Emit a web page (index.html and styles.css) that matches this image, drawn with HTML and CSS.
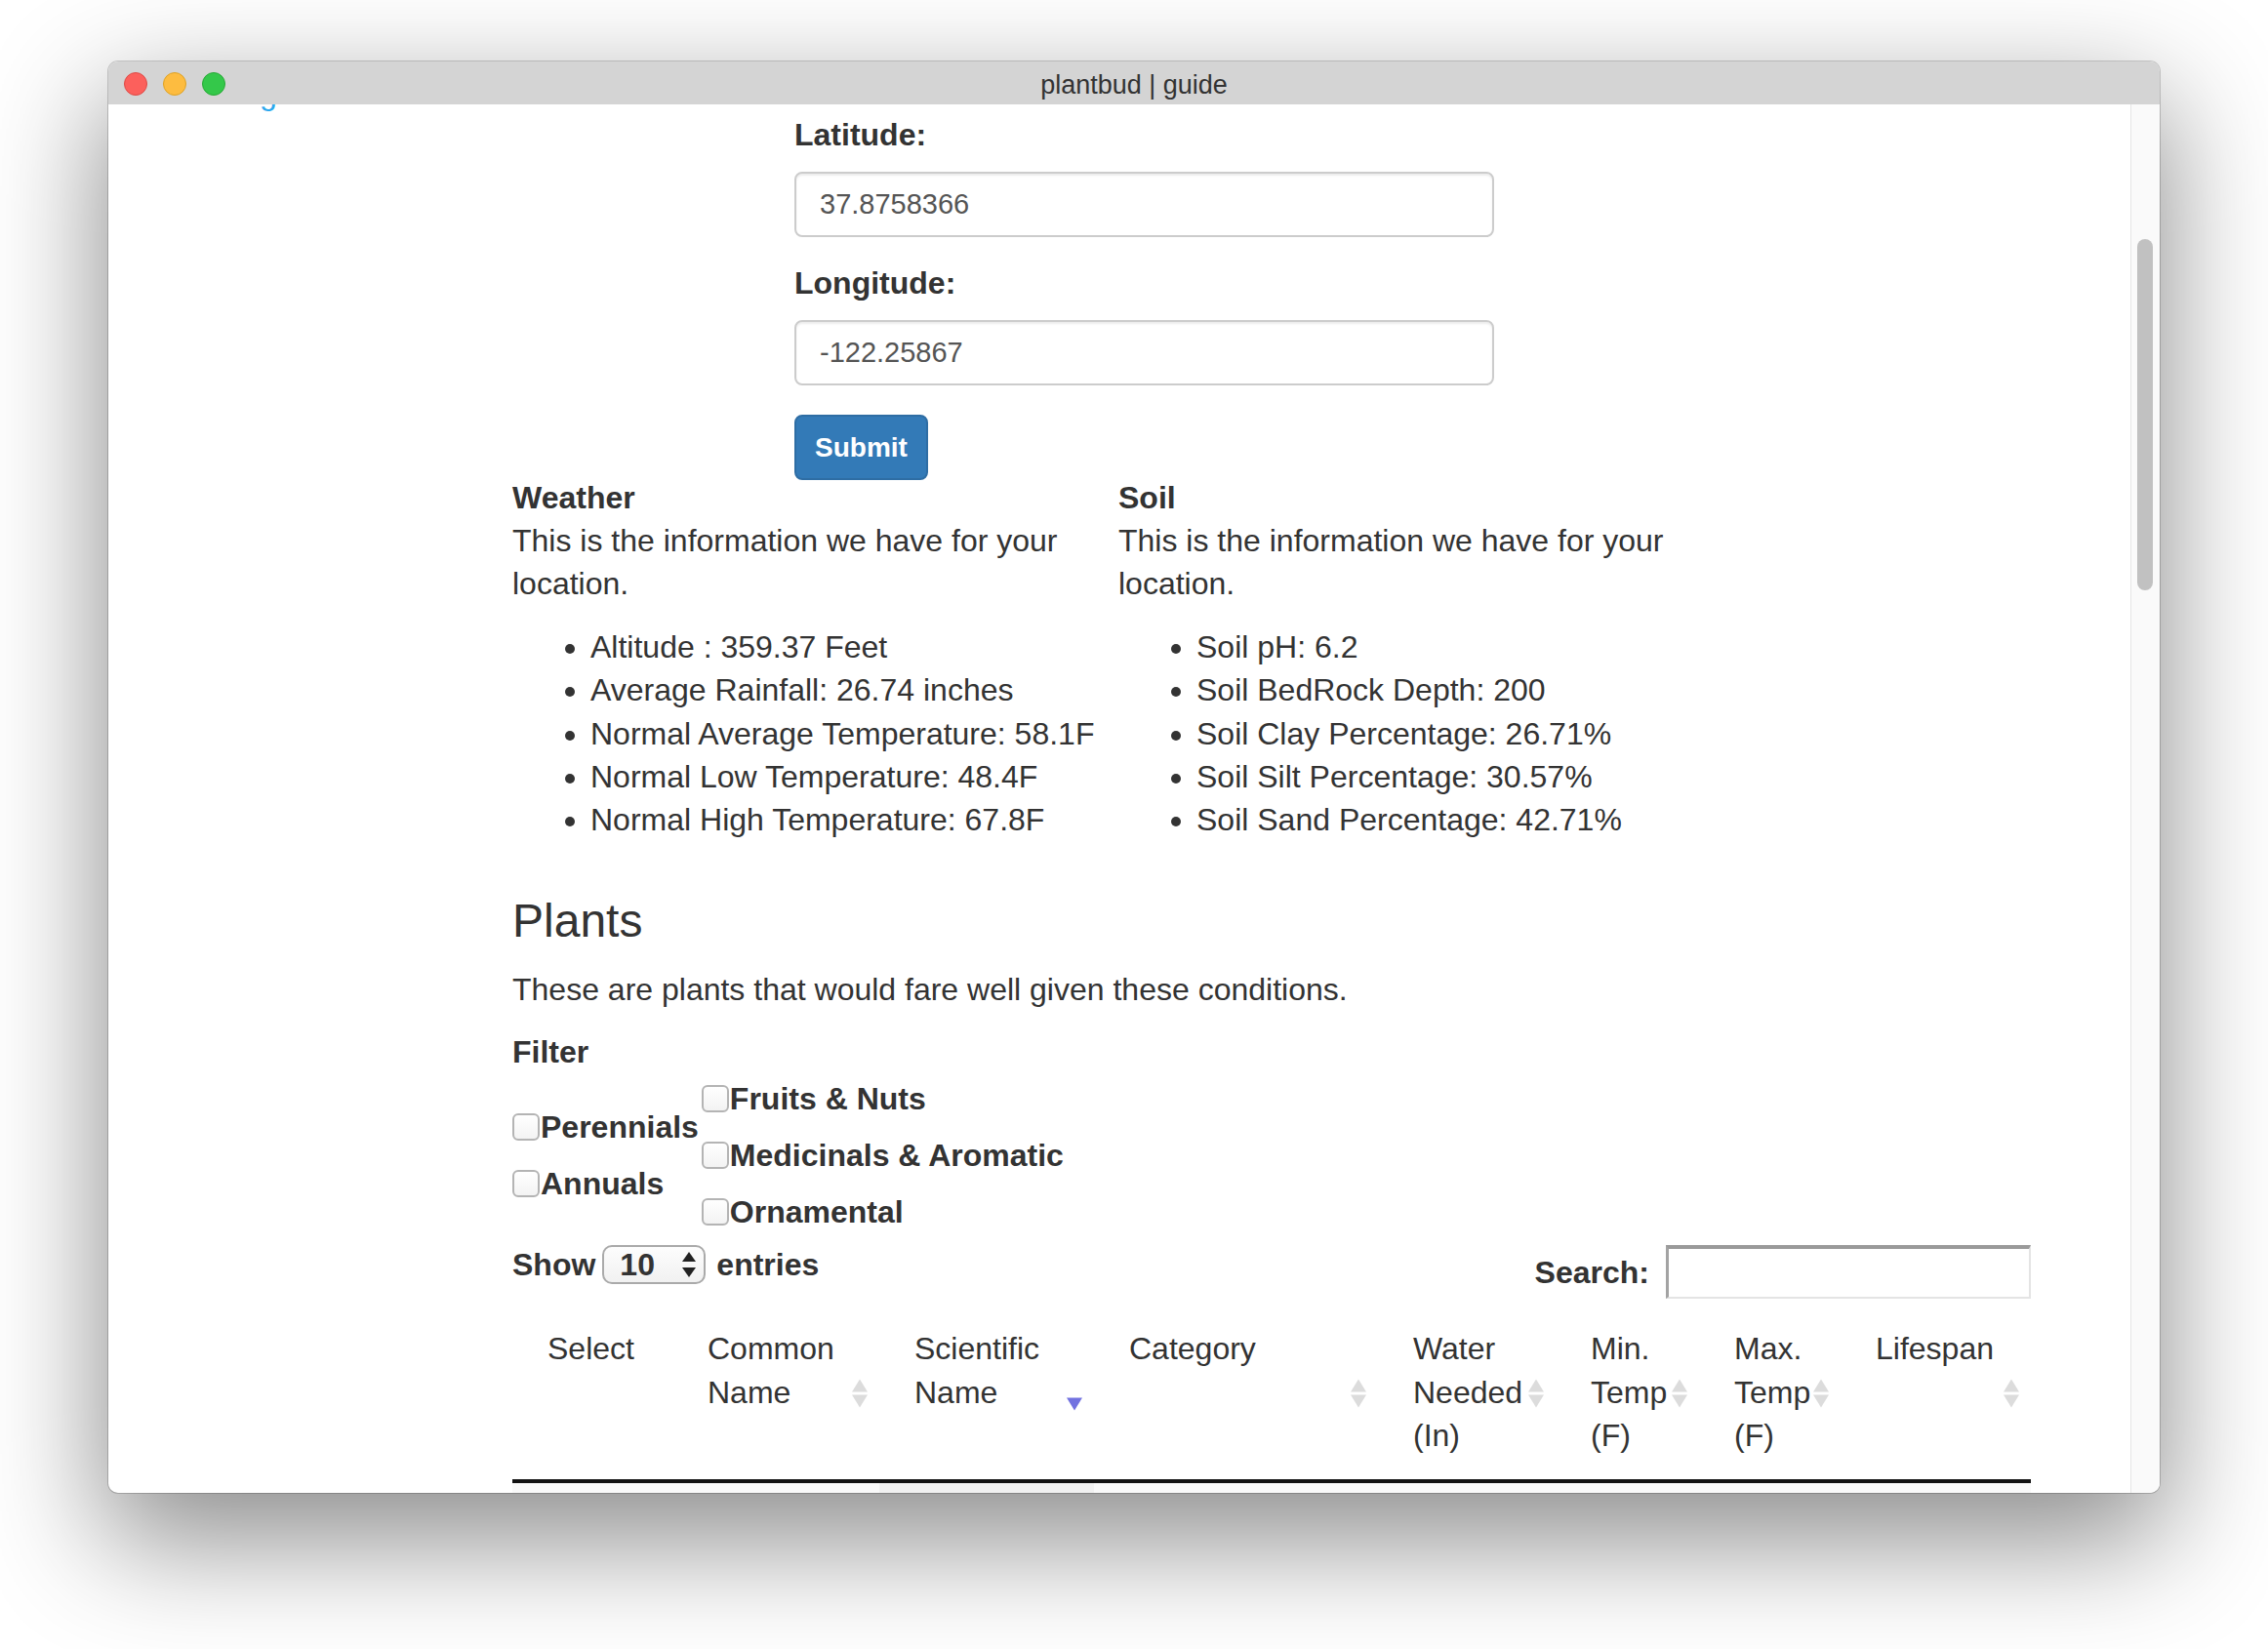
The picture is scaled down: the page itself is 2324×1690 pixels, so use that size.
FILE: index.html
```html
<!DOCTYPE html>
<html lang="en">
<head>
<meta charset="utf-8">
<title>plantbud | guide</title>
<link rel="stylesheet" href="styles.css">
</head>
<body>
<div class="window">
  <div class="titlebar">
    <div class="lights">
      <span class="light light-red"></span>
      <span class="light light-yellow"></span>
      <span class="light light-green"></span>
    </div>
    <div class="title">plantbud | guide</div>
    <div></div>
  </div>
  <div class="viewport">
    <div class="page">
      <aside class="sidebar">
        <a class="nav-link" href="#">guide</a>
      </aside>
      <main class="main">
        <form class="loc-form">
          <div class="form-group">
            <label class="form-label" for="lat">Latitude:</label>
            <input class="form-input" id="lat" type="text" value="37.8758366">
          </div>
          <div class="form-group">
            <label class="form-label" for="lng">Longitude:</label>
            <input class="form-input" id="lng" type="text" value="-122.25867">
          </div>
          <button class="btn-submit" type="button">Submit</button>
        </form>

        <div class="info">
          <div class="info-col">
            <h4 class="info-title">Weather</h4>
            <p class="info-text">This is the information we have for your location.</p>
            <ul class="info-list">
              <li>Altitude : 359.37 Feet</li>
              <li>Average Rainfall: 26.74 inches</li>
              <li>Normal Average Temperature: 58.1F</li>
              <li>Normal Low Temperature: 48.4F</li>
              <li>Normal High Temperature: 67.8F</li>
            </ul>
          </div>
          <div class="info-col">
            <h4 class="info-title">Soil</h4>
            <p class="info-text">This is the information we have for your location.</p>
            <ul class="info-list">
              <li>Soil pH: 6.2</li>
              <li>Soil BedRock Depth: 200</li>
              <li>Soil Clay Percentage: 26.71%</li>
              <li>Soil Silt Percentage: 30.57%</li>
              <li>Soil Sand Percentage: 42.71%</li>
            </ul>
          </div>
        </div>

        <h3 class="plants-title">Plants</h3>
        <p class="plants-text">These are plants that would fare well given these conditions.</p>
        <p class="filter-title">Filter</p>
        <div class="filters">
          <div class="filter-col">
            <label class="check"><span class="box"></span>Perennials</label>
            <label class="check"><span class="box"></span>Annuals</label>
          </div>
          <div class="filter-col">
            <label class="check"><span class="box"></span>Fruits &amp; Nuts</label>
            <label class="check"><span class="box"></span>Medicinals &amp; Aromatic</label>
            <label class="check"><span class="box"></span>Ornamental</label>
          </div>
        </div>

        <div class="dt-top">
          <div class="dt-length">
            <span>Show</span>
            <span class="select">
              <span class="select-val">10</span>
              <svg class="select-arrows" width="16" height="28" viewBox="0 0 16 28"><path d="M8 1 L15 11 L1 11 Z" fill="#222"/><path d="M1 17 L15 17 L8 27 Z" fill="#222"/></svg>
            </span>
            <span>entries</span>
          </div>
          <div class="dt-filter">
            <span>Search:</span>
            <span class="search-input"></span>
          </div>
        </div>

        <table class="plants-table">
          <colgroup>
            <col class="c-select"><col class="c-common"><col class="c-sci"><col class="c-cat">
            <col class="c-water"><col class="c-min"><col class="c-max"><col class="c-life">
          </colgroup>
          <thead>
            <tr>
              <th>Select</th>
              <th>Common Name<span class="sort"></span></th>
              <th>Scientific Name<span class="sort sort-desc"></span></th>
              <th>Category<span class="sort"></span></th>
              <th>Water Needed (In)<span class="sort"></span></th>
              <th>Min. Temp (F)<span class="sort"></span></th>
              <th>Max. Temp (F)<span class="sort"></span></th>
              <th>Lifespan<span class="sort"></span></th>
            </tr>
          </thead>
          <tbody>
            <tr>
              <td>&nbsp;</td><td>&nbsp;</td><td class="sorted">&nbsp;</td><td>&nbsp;</td>
              <td>&nbsp;</td><td>&nbsp;</td><td>&nbsp;</td><td>&nbsp;</td>
            </tr>
          </tbody>
        </table>
      </main>
    </div>
    <div class="scrollbar"><div class="thumb"></div></div>
  </div>
</div>
</body>
</html>
```

FILE: styles.css
```css
* { box-sizing: border-box; }

html, body {
  margin: 0;
  padding: 0;
  background: #ffffff;
}

body {
  min-height: 1690px;
  padding-top: 63px;
  font-family: "Liberation Sans", Arial, sans-serif;
  font-size: 32px;
  line-height: 44px;
  color: #333333;
}

.window {
  width: 2102px;
  height: 1467px;
  margin-left: 111px;
  border-radius: 10px;
  overflow: hidden;
  background: #ffffff;
  display: flex;
  flex-direction: column;
  box-shadow: 0 44px 120px 6px rgba(0, 0, 0, 0.45), 0 0 0 1px rgba(0, 0, 0, 0.18);
}

/* title bar */
.titlebar {
  flex: none;
  height: 44px;
  background: #d4d4d4;
  display: grid;
  grid-template-columns: 1fr auto 1fr;
  align-items: center;
}

.lights {
  display: flex;
  gap: 16px;
  padding-left: 16px;
}

.light {
  width: 24px;
  height: 24px;
  border-radius: 50%;
  border: 1px solid rgba(0, 0, 0, 0.12);
}
.light-red { background: #fc605c; border-color: #de4a45; }
.light-yellow { background: #fdbc40; border-color: #dea224; }
.light-green { background: #34c84a; border-color: #27a935; }

.title {
  font-size: 27px;
  line-height: 44px;
  color: #333333;
  padding-top: 2px;
}

/* viewport */
.viewport {
  flex: 1;
  min-height: 0;
  display: flex;
}

.page {
  flex: 1;
  min-width: 0;
  display: flex;
  overflow: hidden;
}

.sidebar {
  flex: none;
  width: 414px;
  padding-left: 155px;
}

.nav-link {
  display: block;
  margin-top: -33px;
  color: #2aa8ee;
  text-decoration: none;
}

.main {
  flex: none;
  width: 1556px;
  padding-top: 9px;
}

.scrollbar {
  flex: none;
  width: 30px;
  background: #fafafa;
  border-left: 1px solid #e6e6e6;
  padding: 138px 0 0 6px;
}

.thumb {
  width: 16px;
  height: 360px;
  border-radius: 8px;
  background: #c1c1c1;
}

/* location form */
.loc-form {
  margin-left: 289px;
  width: 717px;
}

.form-group {
  margin-bottom: 25px;
}

.form-label {
  display: block;
  font-weight: bold;
  margin-bottom: 16px;
}

.form-input {
  display: block;
  width: 100%;
  height: 67px;
  border: 2px solid #cccccc;
  border-radius: 8px;
  padding: 0 24px;
  font-family: "Liberation Sans", Arial, sans-serif;
  font-size: 29px;
  color: #555555;
  box-shadow: inset 0 2px 2px rgba(0, 0, 0, 0.075);
  outline: none;
}

.btn-submit {
  display: block;
  margin-top: 30px;
  height: 67px;
  padding: 0 19px;
  background: #337ab7;
  border: 2px solid #2e6da4;
  border-radius: 8px;
  color: #ffffff;
  font-family: "Liberation Sans", Arial, sans-serif;
  font-size: 28px;
  font-weight: bold;
}

/* weather / soil */
.info {
  display: flex;
  gap: 21px;
  margin-top: -4px;
}

.info-col {
  width: 600px;
}

.info-title {
  margin: 0;
  font-size: 32px;
  font-weight: bold;
}

.info-text {
  margin: 0 0 21px;
}

.info-list {
  margin: 0 0 18px;
  padding-left: 80px;
  line-height: 44.3px;
}

/* plants */
.plants-title {
  margin: 37px 0 22px;
  font-size: 48px;
  font-weight: normal;
  line-height: 53px;
}

.plants-text {
  margin: 0 0 20px;
}

.filter-title {
  margin: 0;
  font-weight: bold;
}

.filters {
  display: flex;
  align-items: center;
  gap: 3px;
  margin-top: -3px;
}

.filter-col {
  display: flex;
  flex-direction: column;
}

.check {
  display: flex;
  align-items: center;
  gap: 1px;
  height: 58px;
  font-weight: bold;
}

.box {
  width: 28px;
  height: 28px;
  border: 2px solid #b4b4b4;
  border-radius: 6px;
  background: linear-gradient(#ffffff, #f3f3f3);
}

/* datatable controls */
.dt-top {
  display: flex;
  justify-content: space-between;
  align-items: flex-start;
  margin-top: 3px;
}

.dt-length {
  display: flex;
  align-items: center;
  height: 44px;
  font-weight: bold;
}

.select {
  width: 106px;
  height: 40px;
  margin: 0 11px 0 7px;
  border: 2px solid #aaaaaa;
  border-radius: 10px;
  background: linear-gradient(#fdfdfd, #f1f1f1);
  display: flex;
  align-items: center;
  justify-content: space-between;
  padding: 0 7px 0 16px;
}

.select-val {
  line-height: 36px;
}

.dt-filter {
  display: flex;
  align-items: center;
  gap: 17px;
  margin-top: 2px;
  font-weight: bold;
}

.search-input {
  width: 374px;
  height: 55px;
  border-style: solid;
  border-width: 4px 2px 2px 3px;
  border-color: #9a9a9a #e4e4e4 #e4e4e4 #a3a3a3;
  background: #ffffff;
}

/* table */
.plants-table {
  width: 1556px;
  table-layout: fixed;
  border-collapse: separate;
  border-spacing: 0;
  margin-top: 9px;
}

.c-select { width: 164px; }
.c-common { width: 212px; }
.c-sci { width: 220px; }
.c-cat { width: 291px; }
.c-water { width: 182px; }
.c-min { width: 147px; }
.c-max { width: 145px; }
.c-life { width: 195px; }

.plants-table th {
  position: relative;
  text-align: left;
  font-weight: normal;
  vertical-align: top;
  padding: 20px 30px 22px 36px;
  line-height: 44.4px;
  border-bottom: 4px solid #111111;
}

.sort {
  position: absolute;
  right: 12px;
  top: 50%;
  transform: translateY(-50%);
  display: flex;
  flex-direction: column;
  gap: 3px;
}

.sort::before,
.sort::after {
  content: "";
  display: block;
  width: 0;
  height: 0;
  border-left: 8px solid transparent;
  border-right: 8px solid transparent;
}

.sort::before { border-bottom: 13px solid #dcdcdc; }
.sort::after { border-top: 13px solid #dcdcdc; }

.sort-desc { transform: translateY(-40%); }
.sort-desc::before { border-bottom-color: transparent; }
.sort-desc::after { border-top-color: #7272e0; }

.plants-table td {
  height: 90px;
  background: #f9f9f9;
}

.plants-table td.sorted {
  background: #f1f1f1;
}
```
